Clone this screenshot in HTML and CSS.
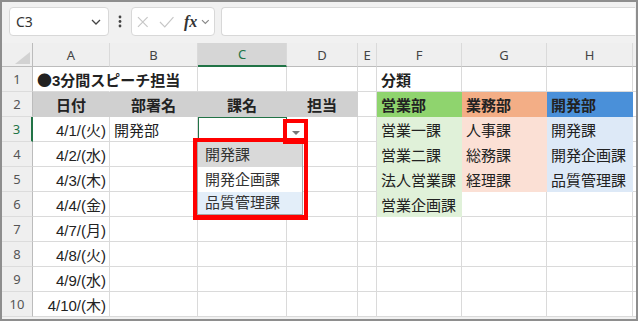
FILE: index.html
```html
<!DOCTYPE html>
<html lang="ja">
<head>
  <meta charset="UTF-8">
  <title>課名の入力規則</title>
  <link rel="stylesheet" href="styles.css">
</head>
<body>
<div class="window">
  <div class="toolbar">
    <div class="namebox">
      <span>C3</span>
      <svg width="10" height="6" viewBox="0 0 10 6"><path d="M1 1l4 4 4-4" fill="none" stroke="#444" stroke-width="1.3"/></svg>
    </div>
    <div class="dots">
      <svg width="4" height="13" viewBox="0 0 4 13"><circle cx="2" cy="2" r="1.4"/><circle cx="2" cy="6.5" r="1.4"/><circle cx="2" cy="11" r="1.4"/></svg>
    </div>
    <div class="fxbox">
      <svg width="12" height="12" viewBox="0 0 12 12"><path d="M1 1l10 10M11 1L1 11" fill="none" stroke="#c6c6c6" stroke-width="1.2"/></svg>
      <svg width="16" height="12" viewBox="0 0 16 12"><path d="M1 6l5 5L15 1" fill="none" stroke="#c6c6c6" stroke-width="1.2"/></svg>
      <span class="fx">fx</span>
      <svg width="9" height="6" viewBox="0 0 9 6"><path d="M1 1l3.5 3.5L8 1" fill="none" stroke="#888" stroke-width="1.2"/></svg>
    </div>
    <div class="formula"></div>
  </div>

  <div class="sheet">
    <!-- 列見出し -->
    <div class="c corner"><span class="tri"></span></div>
    <div class="c ch">A</div>
    <div class="c ch">B</div>
    <div class="c ch on">C</div>
    <div class="c ch">D</div>
    <div class="c ch">E</div>
    <div class="c ch">F</div>
    <div class="c ch">G</div>
    <div class="c ch">H</div>
    <div class="c ch last"></div>

    <!-- 1 -->
    <div class="c rh">1</div>
    <div class="c b nob"><span class="dot">●</span>3分間スピーチ担当</div>
    <div class="c"></div>
    <div class="c"></div>
    <div class="c"></div>
    <div class="c"></div>
    <div class="c b">分類</div>
    <div class="c"></div>
    <div class="c"></div>
    <div class="c last"></div>

    <!-- 2 -->
    <div class="c rh">2</div>
    <div class="c hd">日付</div>
    <div class="c hd">部署名</div>
    <div class="c hd">課名</div>
    <div class="c hd">担当</div>
    <div class="c"></div>
    <div class="c b green">営業部</div>
    <div class="c b salmon">業務部</div>
    <div class="c b blue">開発部</div>
    <div class="c last"></div>

    <!-- 3 -->
    <div class="c rh on">3</div>
    <div class="c r">4/1/(火)</div>
    <div class="c">開発部</div>
    <div class="c sel"></div>
    <div class="c"></div>
    <div class="c"></div>
    <div class="c lgreen">営業一課</div>
    <div class="c lsalmon">人事課</div>
    <div class="c lblue">開発課</div>
    <div class="c last"></div>

    <!-- 4 -->
    <div class="c rh">4</div>
    <div class="c r">4/2/(水)</div>
    <div class="c"></div>
    <div class="c"></div>
    <div class="c"></div>
    <div class="c"></div>
    <div class="c lgreen">営業二課</div>
    <div class="c lsalmon">総務課</div>
    <div class="c lblue">開発企画課</div>
    <div class="c last"></div>

    <!-- 5 -->
    <div class="c rh">5</div>
    <div class="c r">4/3/(木)</div>
    <div class="c"></div>
    <div class="c"></div>
    <div class="c"></div>
    <div class="c"></div>
    <div class="c lgreen">法人営業課</div>
    <div class="c lsalmon">経理課</div>
    <div class="c lblue">品質管理課</div>
    <div class="c last"></div>

    <!-- 6 -->
    <div class="c rh">6</div>
    <div class="c r">4/4/(金)</div>
    <div class="c"></div>
    <div class="c"></div>
    <div class="c"></div>
    <div class="c"></div>
    <div class="c lgreen">営業企画課</div>
    <div class="c"></div>
    <div class="c"></div>
    <div class="c last"></div>

    <!-- 7 -->
    <div class="c rh">7</div>
    <div class="c r">4/7/(月)</div>
    <div class="c"></div>
    <div class="c"></div>
    <div class="c"></div>
    <div class="c"></div>
    <div class="c"></div>
    <div class="c"></div>
    <div class="c"></div>
    <div class="c last"></div>

    <!-- 8 -->
    <div class="c rh">8</div>
    <div class="c r">4/8/(火)</div>
    <div class="c"></div>
    <div class="c"></div>
    <div class="c"></div>
    <div class="c"></div>
    <div class="c"></div>
    <div class="c"></div>
    <div class="c"></div>
    <div class="c last"></div>

    <!-- 9 -->
    <div class="c rh">9</div>
    <div class="c r">4/9/(水)</div>
    <div class="c"></div>
    <div class="c"></div>
    <div class="c"></div>
    <div class="c"></div>
    <div class="c"></div>
    <div class="c"></div>
    <div class="c"></div>
    <div class="c last"></div>

    <!-- 10 -->
    <div class="c rh">10</div>
    <div class="c r">4/10/(木)</div>
    <div class="c"></div>
    <div class="c"></div>
    <div class="c"></div>
    <div class="c"></div>
    <div class="c"></div>
    <div class="c"></div>
    <div class="c"></div>
    <div class="c last"></div>
  </div>

  <!-- ドロップダウン -->
  <div class="ddbtn"><span></span></div>
  <ul class="list">
    <li class="hover">開発課</li>
    <li>開発企画課</li>
    <li class="pick">品質管理課</li>
  </ul>
  <div class="mark small"></div>
  <div class="mark big"></div>
</div>
</body>
</html>
```

FILE: styles.css
```css
*{
    margin: 0;
    padding: 0;
}
body{
    font-family: "Liberation Sans", "Noto Sans CJK JP", sans-serif;
    background: #fff;
}
.window{
    position: relative;
    width: 638px;
    height: 321px;
    box-sizing: border-box;
    border: 2px solid #8e8e8e;
    background: #f1f1f1;
    overflow: hidden;
}

/* 数式バー */
.toolbar{
    display: flex;
    align-items: center;
    height: 41px;
    box-sizing: border-box;
    padding: 5px 1px 7px 7px;
}
.namebox{
    width: 100px;
    height: 29px;
    box-sizing: border-box;
    border: 1px solid #d8d8d8;
    border-radius: 4px;
    background: #fff;
    display: flex;
    align-items: center;
    justify-content: space-between;
    padding: 0 7px 0 6px;
    font-family: "Noto Sans", sans-serif;
    font-size: 14px;
    color: #333;
}
.dots{
    width: 22px;
    display: flex;
    justify-content: center;
    fill: #444;
}
.fxbox{
    width: 84px;
    height: 29px;
    box-sizing: border-box;
    border: 1px solid #d8d8d8;
    border-radius: 4px;
    background: #fff;
    display: flex;
    align-items: center;
    padding: 0 4px 0 5px;
}
.fxbox svg:nth-child(2){
    margin-left: 10px;
}
.fx{
    margin-left: 10px;
    margin-right: 4px;
    font-family: "Liberation Serif", serif;
    font-style: italic;
    font-weight: bold;
    font-size: 16px;
    color: #333;
}
.formula{
    flex: 1;
    height: 29px;
    box-sizing: border-box;
    margin-left: 6px;
    border: 1px solid #d8d8d8;
    border-right: none;
    border-radius: 4px 0 0 4px;
    background: #fff;
}

/* シート */
.sheet{
    display: grid;
    grid-template-columns: 31px 77px 88px 89px 71px 19px 85px 85px 86px 1fr;
    grid-template-rows: 24px;
    grid-auto-rows: 25px;
    background: #fff;
}
.c{
    box-sizing: border-box;
    border-right: 1px solid #dadada;
    border-bottom: 1px solid #dadada;
    display: flex;
    align-items: center;
    padding: 0 4px;
    font-size: 15px;
    color: #222;
    white-space: nowrap;
    min-width: 0;
}
.c.last{
    border-right: none;
}
.dot{
    font-family: "Noto Sans CJK JP", sans-serif;
}
.corner{
    background: #efefef;
    border-bottom-color: #bcbcbc;
    border-right-color: #bcbcbc;
    position: relative;
}
.tri{
    position: absolute;
    right: 2px;
    bottom: 2px;
    width: 0;
    height: 0;
    border-left: 15px solid transparent;
    border-bottom: 12px solid #d2d2d2;
}
.ch{
    background: #efefef;
    justify-content: center;
    font-family: "Noto Sans", sans-serif;
    font-size: 13px;
    color: #444;
    border-bottom-color: #bcbcbc;
}
.ch.on{
    background: #d6d6d6;
    color: #217346;
    border-bottom: 2px solid #217346;
}
.rh{
    background: #efefef;
    justify-content: center;
    font-family: "Noto Sans", sans-serif;
    font-size: 13px;
    color: #555;
    border-right-color: #bcbcbc;
    border-bottom-color: #dcdcdc;
}
.rh.on{
    color: #217346;
    border-right: 2px solid #217346;
}
.b{
    font-weight: bold;
}
.nob{
    border-right-color: transparent;
}
.r{
    justify-content: flex-end;
    padding-right: 3px;
}
.hd{
    font-weight: bold;
    justify-content: center;
    background: #d0d0d0;
    border-color: #d0d0d0;
}
.sel{
    outline: 1px solid #217346;
    outline-offset: -1px;
}
.green{ background: #8fd46e; border-color: #8fd46e; }
.salmon{ background: #f3ae86; border-color: #f3ae86; }
.blue{ background: #4a90d9; border-color: #4a90d9; }
.lgreen{ background: #e0f1d9; border-color: #e0f1d9; }
.lsalmon{ background: #fbe0d5; border-color: #fbe0d5; }
.lblue{ background: #dde9f7; border-color: #dde9f7; }

/* ドロップダウン */
.ddbtn{
    position: absolute;
    left: 285px;
    top: 121px;
    width: 17px;
    height: 15px;
    background: #fff;
    display: flex;
    align-items: center;
    justify-content: center;
}
.ddbtn span{
    width: 0;
    height: 0;
    border-left: 4px solid transparent;
    border-right: 4px solid transparent;
    border-top: 4px solid #777;
    margin-top: 4px;
}
.list{
    position: absolute;
    left: 195px;
    top: 139px;
    width: 106px;
    height: 74px;
    box-sizing: border-box;
    border: 1px solid #a6a6a6;
    background: #fff;
    list-style: none;
}
.list li{
    height: 25px;
    line-height: 25px;
    padding-left: 7px;
    font-size: 15px;
    color: #333;
}
.list li.pick{
    height: 22px;
    line-height: 22px;
    background: #e3eef9;
}
.list li.hover{
    background: #d9d9d9;
}
.mark{
    position: absolute;
    box-sizing: border-box;
    border: 4px solid #f00;
}
.mark.small{
    left: 281px;
    top: 117px;
    width: 25px;
    height: 25px;
}
.mark.big{
    left: 191px;
    top: 136px;
    width: 115px;
    height: 82px;
    border-bottom-width: 5px;
}
```
